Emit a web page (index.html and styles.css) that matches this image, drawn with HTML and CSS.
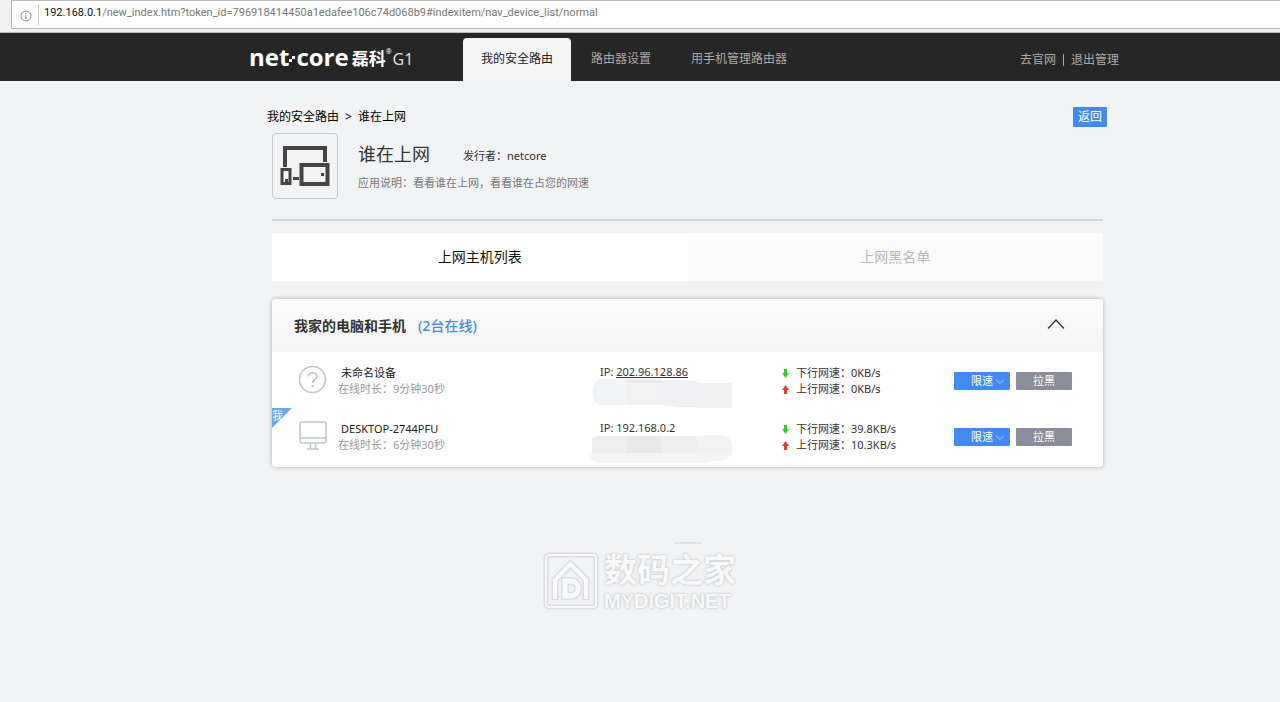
FILE: index.html
```html
<!DOCTYPE html>
<html lang="zh-CN">
<head>
<meta charset="utf-8">
<title>谁在上网</title>
<link rel="stylesheet" href="styles.css">
</head>
<body>
<div class="browser-bar">
  <div class="address">
    <svg class="info-icon" viewBox="0 0 12 12" width="12" height="12" aria-hidden="true"><circle cx="6" cy="6" r="5" fill="none" stroke="#8a8a8a"/><path d="M6 5.2V9M6 3v1.2" stroke="#8a8a8a" fill="none"/></svg>
    <p class="url"><span class="host">192.168.0.1</span>/new_index.htm?token_id=796918414450a1edafee106c74d068b9#indexitem/nav_device_list/normal</p>
  </div>
</div>
<header class="site-header">
  <div class="logo"><span class="logo-latin">net<svg class="logo-dot" viewBox="0 0 7 10" width="7" height="10" aria-hidden="true"><path d="M0 5h3v3H0zM3 2h3v3H3z" fill="#fff"/></svg>core</span><span class="logo-cn">磊科</span><span class="logo-reg">®</span><span class="logo-model">G1</span></div>
  <nav class="main-nav">
    <a class="nav-link current" href="#safe">我的安全路由</a>
    <a class="nav-link" href="#settings">路由器设置</a>
    <a class="nav-link" href="#phone">用手机管理路由器</a>
  </nav>
  <div class="user-links"><a href="#site">去官网</a><a href="#exit">退出管理</a></div>
</header>
<main class="content">
  <div class="crumb-row">
    <p class="crumbs"><a href="#safe">我的安全路由</a><span>&gt;</span><a href="#online">谁在上网</a></p>
    <button class="back" type="button">返回</button>
  </div>
  <section class="app-info">
    <div class="app-icon">
      <svg viewBox="0 0 50 42" width="50" height="42" aria-hidden="true">
        <g fill="none" stroke="#444">
          <path d="M5 22V3H45V17" stroke-width="4"/>
          <rect x="21.500" y="20" width="26" height="19" stroke-width="4"/>
          <rect x="2" y="24.500" width="8" height="14" stroke-width="3"/>
        </g>
        <path d="M13 32h6v3h-6zM41 28h3v3h-3zM5 34h3v3H5z" fill="#444"/>
      </svg>
    </div>
    <div class="app-text">
      <div class="app-title"><h1>谁在上网</h1><span>发行者：netcore</span></div>
      <p class="app-desc">应用说明：看看谁在上网，看看谁在占您的网速</p>
    </div>
  </section>
  <div class="tabs">
    <button class="tab active" type="button">上网主机列表</button>
    <button class="tab" type="button">上网黑名单</button>
  </div>
  <section class="panel">
    <div class="panel-head">
      <h2>我家的电脑和手机</h2><span class="count">(2台在线)</span>
      <button class="collapse" type="button" aria-label="收起"><svg viewBox="0 0 18 10" width="18" height="10"><path d="M1 9.500L9 1l8 8.500" fill="none" stroke="#333" stroke-width="1.300"/></svg></button>
    </div>
    <div class="device">
      <svg class="device-icon" viewBox="0 0 28 30" width="28" height="30" aria-hidden="true"><g fill="none" stroke="#bcc6cc" stroke-width="1.600"><circle cx="13.500" cy="14.500" r="13"/><path d="M9.500 11.500c0-5 8.500-5 8.500 0 0 3-4.300 3-4.300 6.500"/></g><circle cx="13.700" cy="21" r="1.200" fill="#bcc6cc"/></svg>
      <div class="device-name"><p class="name">未命名设备</p><p class="time">在线时长：9分钟30秒</p></div>
      <div class="device-ip">
        <p>IP: <u>202.96.128.86</u></p>
        <svg viewBox="0 0 144 30" width="144" height="30" aria-hidden="true"><path d="M12 0h28v26H13C2 26 2 3 12 0z" fill="#f3f4f5"/><path d="M39 0h35v26H39z" fill="#f1f1f2"/><path d="M39 0h35v4H39z" fill="#e9eaeb"/><path d="M74 1h17l18 1v26H92l-18-2z" fill="#efeff4"/><path d="M109 4h35v25h-35z" fill="#f0f0f1"/></svg>
      </div>
      <div class="speeds">
        <p><svg viewBox="0 0 7 9" width="7" height="9" aria-hidden="true"><path d="M2 0h3v4h2L3.500 9 0 4h2z" fill="#3bcb29"/></svg>下行网速：0KB/s</p>
        <p><svg viewBox="0 0 7 9" width="7" height="9" aria-hidden="true"><path d="M2 9h3V5h2L3.500 0 0 5h2z" fill="#e63b2e"/></svg>上行网速：0KB/s</p>
      </div>
      <div class="actions">
        <button class="limit" type="button">限速<svg viewBox="0 0 8 5" width="8" height="5" aria-hidden="true"><path d="M0 .5l4 4 4-4" fill="none" stroke="#a9cdfb"/></svg></button>
        <button class="block" type="button">拉黑</button>
      </div>
    </div>
    <div class="device mine">
      <span class="badge"><span>我</span></span>
      <svg class="device-icon" viewBox="0 0 28 30" width="28" height="30" aria-hidden="true"><g fill="none" stroke="#bcc8cc" stroke-width="1.600"><rect x="1" y="1" width="26" height="21" rx="2"/><path d="M1 17h26M11.500 22.500v5M16.500 22.500v5M8 28h12"/></g></svg>
      <div class="device-name"><p class="name">DESKTOP-2744PFU</p><p class="time">在线时长：6分钟30秒</p></div>
      <div class="device-ip">
        <p>IP: 192.168.0.2</p>
        <svg viewBox="0 0 144 30" width="144" height="30" aria-hidden="true"><path d="M0 18h144c-2 6-9 8-19 8l-7 2H16C8 28 2 25 0 18z" fill="#f5f5f5"/><path d="M8 1h31v17H4V4z" fill="#eeeeef"/><path d="M39 1h35v17H39z" fill="#e9e9ea"/><path d="M74 1h35v17H74z" fill="#eeeff1"/><path d="M109 1c15-2 35-3 35 9v8h-35z" fill="#f4f3f3"/></svg>
      </div>
      <div class="speeds">
        <p><svg viewBox="0 0 7 9" width="7" height="9" aria-hidden="true"><path d="M2 0h3v4h2L3.500 9 0 4h2z" fill="#3bcb29"/></svg>下行网速：39.8KB/s</p>
        <p><svg viewBox="0 0 7 9" width="7" height="9" aria-hidden="true"><path d="M2 9h3V5h2L3.500 0 0 5h2z" fill="#e63b2e"/></svg>上行网速：10.3KB/s</p>
      </div>
      <div class="actions">
        <button class="limit" type="button">限速<svg viewBox="0 0 8 5" width="8" height="5" aria-hidden="true"><path d="M0 .5l4 4 4-4" fill="none" stroke="#a9cdfb"/></svg></button>
        <button class="block" type="button">拉黑</button>
      </div>
    </div>
  </section>
  <div class="mark">
    <svg class="mark-icon" viewBox="0 0 56 58" width="56" height="58" aria-hidden="true">
      <rect x="3" y="3" width="50" height="52" rx="3" fill="none" stroke="#dddee0" stroke-width="5"/>
      <rect x="3" y="3" width="50" height="52" rx="3" fill="none" stroke="#f8f9fa" stroke-width="2"/>
      <path d="M12 48V28L27.500 12 43 28v20" fill="none" stroke="#dddee0" stroke-width="7"/>
      <path d="M12 47V28L27.500 12 43 28v19" fill="none" stroke="#f8f9fa" stroke-width="4"/>
      <path d="M22 29h5c11 0 11 15 0 15h-5z" fill="none" stroke="#dddee0" stroke-width="8"/>
      <path d="M22 29h5c11 0 11 15 0 15h-5z" fill="none" stroke="#f8f9fa" stroke-width="5"/>
    </svg>
    <div class="mark-text"><span class="mark-line"></span><p class="mark-cn">数码之家</p><p class="mark-en">MYDIGIT.NET</p></div>
  </div>
</main>
</body>
</html>
```
FILE: styles.css
```css
* { box-sizing: border-box; }
body {
  margin: 0;
  background: #f2f3f5;
  color: #333;
  font: 11px/16px "Noto Sans", "Noto Sans CJK SC", sans-serif;
}
p, h1, h2 { margin: 0; font-weight: 400; }
a { color: inherit; text-decoration: none; }
button { border: 0; padding: 0; font: inherit; cursor: pointer; }
svg { display: block; flex: none; }

.browser-bar { height: 33px; padding-left: 11px; background: #f0f0f0; border-bottom: 1px solid #bbb; }
.address {
  display: flex;
  height: 29px;
  background: #fff;
  border: 1px solid #bbb;
  border-right: 0;
}
.info-icon { margin: 9px 6px 0 8px; }
.url {
  margin: 3px 0;
  padding: 1px 0 0 5px;
  border-left: 1px solid #ccc;
  color: #777;
  font-family: Roboto, sans-serif;
  white-space: nowrap;
}
.host { color: #111; }

.site-header {
  display: flex;
  height: 48px;
  padding: 0 161px 0 249px;
  background: #262626;
  color: #aaa;
  font-size: 12px;
}
.logo { display: flex; width: 214px; color: #fff; line-height: 52px; white-space: nowrap; }
.logo-latin { display: flex; align-items: center; font-size: 24px; font-family: "Open Sans", sans-serif; font-weight: 700; }
.logo-dot { margin-top: 4px; }
.logo-cn { margin-left: 3px; font-size: 17px; font-weight: 700; }
.logo-reg { font-size: 7px; line-height: 38px; }
.logo-model { margin-left: 1px; font-size: 16px; color: #ddd; }
.main-nav { display: flex; padding-top: 5px; }
.nav-link { padding: 0 20px; line-height: 42px; }
.nav-link.current { padding: 0 18px; border-radius: 4px 4px 0 0; background: #f5f5f5; color: #222; }
.user-links { display: flex; align-items: center; margin: 5px 0 0 auto; }
.user-links a + a { margin-left: 7px; padding-left: 7px; border-left: 1px solid #aaa; line-height: 12px; }

.content { padding: 26px 173px 0 267px; }
.crumb-row { display: flex; justify-content: space-between; color: #000; font-size: 12px; line-height: 20px; }
.crumbs span { margin: 0 6px; }
.back { width: 34px; height: 20px; border-radius: 1px; background: #438bee; color: #fff; }
.app-info {
  display: flex;
  margin: 6px 4px 0 5px;
  padding-bottom: 20px;
  border-bottom: 2px solid #d6d7da;
}
.app-icon { display: grid; place-items: center; width: 66px; height: 66px; border: 1px solid #c8c9cc; border-radius: 4px; }
.app-text { padding: 9px 0 0 20px; }
.app-title { display: flex; align-items: center; gap: 33px; }
h1 { font-size: 18px; line-height: 24px; }
.app-title span { padding-top: 4px; }
.app-desc { margin-top: 9px; color: #777; }

.tabs { display: grid; grid-template-columns: 1fr 1fr; margin: 12px 4px 0 5px; }
.tab { height: 48px; background: #fbfbfb; color: #b8b8b8; font-size: 14px; }
.tab.active { background: #fff; color: #111; }

.panel {
  margin: 18px 4px 0 5px;
  border-radius: 4px;
  background: #fff;
  box-shadow: 0 0 4px #aaacb0;
}
.panel-head {
  display: flex;
  align-items: center;
  height: 53px;
  padding: 0 38px 0 22px;
  border-radius: 4px 4px 0 0;
  background: linear-gradient(#fdfdfd, #f5f5f5);
  font-size: 14px;
}
h2 { font-size: 14px; font-weight: 700; }
.count { margin-left: 12px; color: #438bee; font-weight: 500; }
.collapse { margin: 0 0 4px auto; background: none; }
.device {
  position: relative;
  display: grid;
  grid-template-columns: 39px 250fr 194fr 172fr 118px;
  height: 56px;
  padding: 13px 31px 0 27px;
}
.device.mine { height: 59px; }
.name { padding-left: 3px; color: #222; }
.time { color: #999; }
.device-ip p { padding-left: 12px; line-height: 14px; }
.speeds p { display: flex; align-items: center; gap: 7px; }
.device-name, .speeds { white-space: nowrap; }
.actions { display: flex; justify-content: space-between; margin-top: 7px; }
.actions button { width: 56px; height: 18px; border-radius: 1px; color: #fff; line-height: 18px; }
.actions .limit { display: flex; align-items: center; gap: 3px; padding-left: 17px; background: #438bee; }
.actions .block { background: #8a8e99; }
.badge {
  position: absolute;
  left: 0;
  top: 0;
  width: 20px;
  height: 20px;
  background: #69a5fa;
  clip-path: polygon(0 0, 100% 0, 0 100%);
  color: #fff;
}

.mark { display: flex; gap: 5px; margin: 75px 0 0 276px; color: #f8f9fa; text-shadow: 0 0 2px #c4c5c8, 0 0 3px #d0d1d4; }
.mark-icon { margin-top: 10px; }
.mark-line { display: block; width: 28px; height: 2px; margin-left: 70px; background: #e0e1e4; }
.mark-cn { margin-top: 5px; font-size: 33px; font-weight: 700; line-height: 42px; }
.mark-en { font: 700 20px/20px "Liberation Sans", sans-serif; }
```
